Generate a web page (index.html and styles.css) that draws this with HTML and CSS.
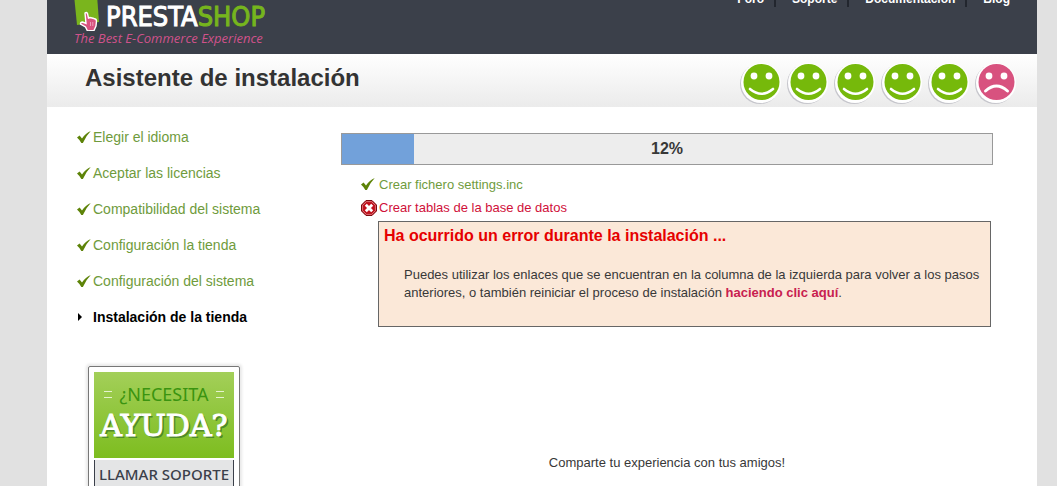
FILE: index.html
```html
<!DOCTYPE html>
<html lang="es">
<head>
  <meta charset="UTF-8">
  <meta name="viewport" content="width=device-width, initial-scale=1.0">
  <title>Asistente de instalación</title>
  <link rel="stylesheet" href="styles.css">
</head>
<body>

<!-- Shared icons -->
<svg class="sprite" aria-hidden="true">
  <symbol id="check" viewBox="0 0 14 12">
    <path d="M0 6.4 L2.6 4.6 L5 7.4 Q8.6 2.2 13.8 0 Q8.8 5 5.9 11.9 L4.3 11.9 Q2.6 8.6 0 6.4 Z" fill="#5d8308"/>
  </symbol>
  <symbol id="happy" viewBox="0 0 42 42">
    <circle cx="20" cy="22" r="20" fill="#c6c6cc"/>
    <circle cx="21" cy="21" r="20" fill="#fff"/>
    <circle cx="21.5" cy="20" r="18" fill="#76b90b"/>
    <circle cx="14" cy="14" r="3.4" fill="#fff"/>
    <circle cx="29" cy="14" r="3.4" fill="#fff"/>
    <path d="M10 27 Q21.5 36.5 33 27" fill="none" stroke="#fff" stroke-width="2.6" stroke-linecap="round"/>
  </symbol>
  <symbol id="sad" viewBox="0 0 42 42">
    <circle cx="20" cy="22" r="20" fill="#c6c6cc"/>
    <circle cx="21" cy="21" r="20" fill="#fff"/>
    <circle cx="21.5" cy="20" r="18" fill="#d8527f"/>
    <circle cx="14" cy="14" r="3.4" fill="#fff"/>
    <circle cx="29" cy="14" r="3.4" fill="#fff"/>
    <path d="M10.5 29 Q21.5 19 32.5 29" fill="none" stroke="#fff" stroke-width="3" stroke-linecap="round"/>
  </symbol>
</svg>

<div class="page">
  <header class="header">
    <a class="logo" href="#">
      <span class="logo-row">
        <svg class="bag" width="30" height="36" viewBox="0 0 30 36" aria-hidden="true">
          <path d="M0 0 L23 0 L25 27 L3 30 Z" fill="#7ab51d"/>
          <path d="M11 18 Q12.5 17 13.5 18.5 L14.5 23 L16 22.5 L18 23 L20 23.5 Q22.5 24 22.5 26 L22 31 L20 35.5 L13.5 36 L11.5 32 L6.5 29 Q6.5 27 8.5 27 L12 28.5 Z" fill="#d8527f" stroke="#fff" stroke-width="1.4"/>
          <path d="M16.5 27 V31 M18.8 27 V31" stroke="#f3b5ca" stroke-width="0.8"/>
        </svg>
        <span class="brand">PRESTA<span class="brand-green">SHOP</span></span>
      </span>
      <span class="tagline">The Best E-Commerce Experience</span>
    </a>
    <nav class="nav">
      <a href="#">Foro</a>
      <a href="#">Soporte</a>
      <a href="#">Documentación</a>
      <a href="#">Blog</a>
    </nav>
  </header>

  <div class="title-bar">
    <h1>Asistente de instalación</h1>
    <div class="faces">
      <svg class="face"><use href="#happy"/></svg>
      <svg class="face"><use href="#happy"/></svg>
      <svg class="face"><use href="#happy"/></svg>
      <svg class="face"><use href="#happy"/></svg>
      <svg class="face"><use href="#happy"/></svg>
      <svg class="face"><use href="#sad"/></svg>
    </div>
  </div>

  <div class="content">
    <aside class="sidebar">
      <ol class="steps">
        <li><svg class="check"><use href="#check"/></svg>Elegir el idioma</li>
        <li><svg class="check"><use href="#check"/></svg>Aceptar las licencias</li>
        <li><svg class="check"><use href="#check"/></svg>Compatibilidad del sistema</li>
        <li><svg class="check"><use href="#check"/></svg>Configuración la tienda</li>
        <li><svg class="check"><use href="#check"/></svg>Configuración del sistema</li>
        <li class="current"><svg class="check" viewBox="0 0 14 12"><path d="M1 2 L5 6 L1 10 Z"/></svg>Instalación de la tienda</li>
      </ol>

      <a class="help" href="#">
        <span class="help-top">
          <span class="help-small">¿NECESITA</span>
          <span class="help-big">AYUDA?</span>
        </span>
        <span class="help-call">LLAMAR SOPORTE</span>
      </a>
    </aside>

    <main class="main">
      <div class="progress" role="progressbar" aria-valuenow="12" aria-valuemin="0" aria-valuemax="100">
        <div class="progress-fill"></div>
        <span class="progress-label">12%</span>
      </div>

      <ul class="tasks">
        <li class="ok"><svg class="task-icon" viewBox="0 -1 16 16"><use href="#check" width="14" height="12"/></svg>Crear fichero settings.inc</li>
        <li class="fail">
          <svg class="task-icon" viewBox="0 0 16 16">
            <path d="M5 0.5 H11 L15.5 5 V11 L11 15.5 H5 L0.5 11 V5 Z" fill="#c0101c" stroke="#7c0a10"/>
            <path d="M5.4 1.6 H10.6 L14.4 5.4 V10.6 L10.6 14.4 H5.4 L1.6 10.6 V5.4 Z" fill="none" stroke="#e08a8e" stroke-width="0.8"/>
            <path d="M4.8 4.8 L11.2 11.2 M11.2 4.8 L4.8 11.2" stroke="#fff" stroke-width="2.8"/>
          </svg>Crear tablas de la base de datos
        </li>
      </ul>

      <section class="error">
        <h2>Ha ocurrido un error durante la instalación ...</h2>
        <p>Puedes utilizar los enlaces que se encuentran en la columna de la izquierda para volver a los pasos anteriores, o también reiniciar el proceso de instalación <a href="#">haciendo clic aquí</a>.</p>
      </section>

      <p class="share">Comparte tu experiencia con tus amigos!</p>
    </main>
  </div>
</div>

</body>
</html>
```
FILE: styles.css
```css
* {
  box-sizing: border-box;
}

body {
  margin: 0;
  padding: 0 20px 0 47px;
  background: #e1e1e1;
  color: #383838;
  font-family: "Liberation Sans", Arial, sans-serif;
  font-size: 13px;
}

a {
  text-decoration: none;
}

ol,
ul {
  list-style: none;
  margin: 0;
  padding: 0;
}

.sprite {
  display: none;
}

.page {
  display: flex;
  flex-direction: column;
  height: 100vh;
  overflow: hidden;
  background: #fff;
}

/* Header */
.header {
  display: flex;
  flex-shrink: 0;
  justify-content: space-between;
  align-items: flex-end;
  height: 54px;
  padding: 0 27px;
  overflow: hidden;
  background: #3b404a;
}

.logo {
  padding-bottom: 9px;
}

.logo-row {
  display: flex;
  align-items: flex-end;
  gap: 2px;
  height: 32px;
}

.brand {
  color: #fff;
  font-family: "Liberation Sans Narrow", "DejaVu Sans Condensed", sans-serif;
  font-size: 27px;
  line-height: 28px;
  -webkit-text-stroke: 1px;
}

.brand-green {
  color: #76b51d;
}

.tagline {
  display: block;
  color: #d0528a;
  font-family: "Open Sans", sans-serif;
  font-size: 13px;
  font-style: italic;
  line-height: 14px;
}

.nav {
  display: flex;
  align-self: flex-start;
  margin-top: -9px;
}

.nav a {
  padding: 0 10px 0 16px;
  color: #fff;
  font-size: 12px;
  font-weight: bold;
  line-height: 16px;
  border-right: 2px solid #22262e;
}

.nav a:last-child {
  padding-right: 0;
  border-right: 0;
}

/* Title */
.title-bar {
  display: flex;
  flex-shrink: 0;
  justify-content: space-between;
  align-items: center;
  height: 53px;
  padding: 0 20px 0 38px;
  background: linear-gradient(#fff, #ebebeb);
}

.title-bar h1 {
  margin: 0 0 6px;
  font-size: 24px;
  color: #333;
}

.faces {
  display: flex;
  gap: 5px;
  padding-top: 4px;
}

.face {
  width: 42px;
  height: 42px;
}

/* Columns */
.content {
  display: flex;
  padding: 12px 44px 0 30px;
}

.sidebar {
  flex: 0 0 264px;
}

.steps li {
  display: flex;
  align-items: center;
  gap: 2px;
  height: 36px;
  color: #6f9b3c;
  font-size: 14px;
}

.steps .current {
  color: #000;
  font-weight: bold;
}

.check {
  width: 14px;
  height: 12px;
}

/* Help banner */
.help {
  display: block;
  width: 152px;
  margin: 31px 0 0 11px;
  padding: 5px;
  border: 1px solid #777;
  border-radius: 2px;
  box-shadow: 0 0 3px 2px #e8e8e8;
}

.help-top {
  display: block;
  height: 86px;
  padding-top: 10px;
  background: linear-gradient(#a3cf59, #7dbd1f);
  text-align: center;
}

.help-small {
  display: flex;
  justify-content: center;
  align-items: center;
  gap: 7px;
  color: #3a9410;
  font-family: "Noto Sans", sans-serif;
  font-size: 18px;
  line-height: 24px;
}

.help-small::before,
.help-small::after {
  content: "";
  width: 8px;
  height: 5px;
  border: solid #e5f3cd;
  border-width: 1px 0;
}

.help-big {
  display: block;
  color: #fff;
  font-family: "DejaVu Serif", serif;
  font-size: 30px;
  line-height: 40px;
  text-shadow: 2px 2px 0 #4f8a2c;
  -webkit-text-stroke: 1px;
}

.help-call {
  display: block;
  height: 50px;
  margin-top: 2px;
  border: solid #3b404a;
  border-width: 0 1px;
  background: #e4e5e6;
  color: #3b404a;
  font-family: "Noto Sans", sans-serif;
  font-size: 15px;
  font-weight: 500;
  line-height: 28px;
  text-align: center;
}

/* Progress */
.main {
  flex: 1;
}

.progress {
  position: relative;
  height: 32px;
  margin-top: 14px;
  border: 1px solid #999;
  background: #ededed;
  text-align: center;
}

.progress-fill {
  position: absolute;
  top: 0;
  bottom: 0;
  left: 0;
  width: 11%;
  background: #72a1da;
}

.progress-label {
  position: relative;
  color: #383838;
  font-size: 16px;
  font-weight: bold;
  line-height: 30px;
}

.tasks {
  padding: 8px 0 0 20px;
}

.tasks li {
  display: flex;
  align-items: center;
  gap: 2px;
  height: 23px;
}

.task-icon {
  width: 16px;
  height: 16px;
}

.ok {
  color: #6f9b3c;
}

.fail {
  color: #d0103a;
}

/* Error box */
.error {
  margin: 2px 2px 0 37px;
  padding: 5px 5px 24px;
  border: 1px solid #666;
  background: #fbe8d8;
}

.error h2 {
  margin: 0 0 21px;
  color: #e60000;
  font-size: 16px;
  line-height: 18px;
}

.error p {
  margin: 0 0 0 20px;
  line-height: 18px;
}

.error a {
  color: #c8204f;
  font-weight: bold;
}

.share {
  margin: 127px 0 0;
  line-height: 18px;
  text-align: center;
}
```
